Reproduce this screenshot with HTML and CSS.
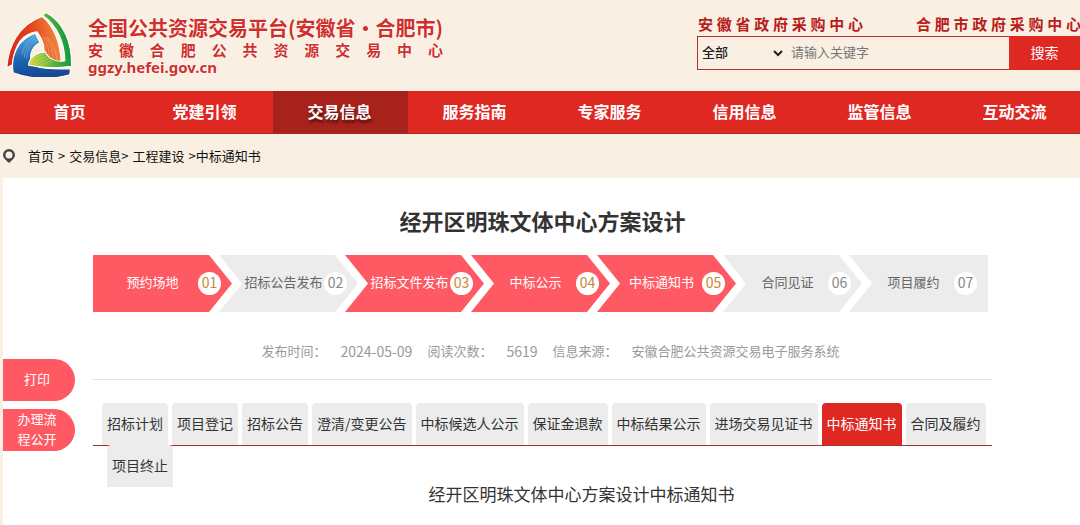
FILE: index.html
```html
<!DOCTYPE html>
<html lang="zh-CN">
<head>
<meta charset="utf-8">
<title>经开区明珠文体中心方案设计</title>
<link rel="stylesheet" href="styles.css">
</head>
<body>
<header class="header">
  <div class="brand">
    <svg class="logo" viewBox="8 0 199 190" aria-hidden="true">
      <defs>
        <linearGradient id="red" x1="0" y1=".8" x2="1" y2=".6"><stop offset="0" stop-color="#d5281c"/><stop offset=".5" stop-color="#e2401c"/><stop offset="1" stop-color="#f08a3c"/></linearGradient>
        <linearGradient id="blue" x1=".3" y1="0" x2=".4" y2="1"><stop offset="0" stop-color="#4fa9dd"/><stop offset=".6" stop-color="#1a63b0"/><stop offset="1" stop-color="#17448f"/></linearGradient>
        <linearGradient id="green" x1="0" y1=".8" x2="1" y2=".6"><stop offset="0" stop-color="#d3d532"/><stop offset=".6" stop-color="#4bae3b"/><stop offset="1" stop-color="#0d9540"/></linearGradient>
      </defs>
      <g stroke="#fff" stroke-width="3" stroke-linejoin="round">
        <path fill="url(#red)" d="M16 164C20 105 48 42 116 18C148 44 168 90 171 151L122 138C125 108 118 82 102 62C62 66 38 98 32 155Z"/>
        <path fill="url(#blue)" d="M34 178C26 125 50 82 97 66L110 92C82 108 76 138 94 158C120 168 160 168 197 167L195 184C140 200 80 196 34 178Z"/>
        <path fill="url(#green)" d="M118 15L128 7C176 34 202 90 200 160C160 166 112 164 78 157C78 136 98 121 126 119C134 138 158 150 181 144C180 90 158 42 118 15Z"/>
      </g>
      <g fill="none" stroke="#fff" stroke-width="1.500" opacity=".5">
        <path d="M112 76C123 92 127 110 128 120M118 76C132 92 136 112 137 132M124 76C141 94 146 114 148 138M130 76C148 94 156 118 158 142"/>
        <path d="M98 73C74 85 62 105 60 128M101 79C78 92 68 110 66 134M104 84C82 98 74 115 72 138"/>
        <path d="M84 153C92 136 108 127 126 126M92 155C102 140 114 134 130 133M101 157C112 145 124 140 137 139M112 158C122 150 134 146 146 145"/>
      </g>
    </svg>
    <div class="brand-text">
      <div class="brand-name">全国公共资源交易平台(安徽省·合肥市)</div>
      <div class="brand-org">安徽合肥公共资源交易中心</div>
      <div class="brand-url">ggzy.hefei.gov.cn</div>
    </div>
  </div>
  <div class="tools">
    <div class="centers">
      <a href="#">安徽省政府采购中心</a>
      <a href="#">合肥市政府采购中心</a>
    </div>
    <form class="search">
      <div class="search-box">
        <select aria-label="搜索范围"><option>全部</option></select>
        <input type="text" placeholder="请输入关键字" aria-label="关键字">
      </div>
      <button type="button">搜索</button>
    </form>
  </div>
</header>

<nav class="nav">
  <a href="#">首页</a>
  <a href="#">党建引领</a>
  <a href="#" class="active">交易信息</a>
  <a href="#">服务指南</a>
  <a href="#">专家服务</a>
  <a href="#">信用信息</a>
  <a href="#">监管信息</a>
  <a href="#">互动交流</a>
</nav>

<div class="crumbs">
  <svg class="pin" viewBox="0 0 12 14" aria-hidden="true"><path fill="#444" fill-rule="evenodd" d="M6 0a6 6 0 0 1 6 6c0 3-3 5-6 8C3 11 0 9 0 6a6 6 0 0 1 6-6Zm0 2.500a3.500 3.500 0 1 0 0 7a3.500 3.500 0 0 0 0-7Z"/></svg>
  <div class="trail"><a href="#">首页</a><span>&gt;</span><a href="#">交易信息&gt;</a><a href="#">工程建设</a><span>&gt;中标通知书</span></div>
</div>

<main class="page">
  <div class="side">
    <button type="button">打印</button>
    <button type="button">办理流<br>程公开</button>
  </div>

  <h1>经开区明珠文体中心方案设计</h1>

  <ol class="steps">
    <li class="done"><span>预约场地</span><b>01</b></li>
    <li><span>招标公告发布</span><b>02</b></li>
    <li class="done"><span>招标文件发布</span><b>03</b></li>
    <li class="done"><span>中标公示</span><b>04</b></li>
    <li class="done"><span>中标通知书</span><b>05</b></li>
    <li><span>合同见证</span><b>06</b></li>
    <li><span>项目履约</span><b>07</b></li>
  </ol>

  <div class="meta">
    <div><span>发布时间：</span><span class="figure">2024-05-09</span></div>
    <div><span>阅读次数：</span><span class="figure">5619</span></div>
    <div><span>信息来源：</span><span>安徽合肥公共资源交易电子服务系统</span></div>
  </div>

  <div class="tabs">
    <button type="button">招标计划</button>
    <button type="button">项目登记</button>
    <button type="button">招标公告</button>
    <button type="button">澄清/变更公告</button>
    <button type="button">中标候选人公示</button>
    <button type="button">保证金退款</button>
    <button type="button">中标结果公示</button>
    <button type="button">进场交易见证书</button>
    <button type="button" class="active">中标通知书</button>
    <button type="button">合同及履约</button>
    <button type="button" class="wrapped">项目终止</button>
  </div>

  <h2>经开区明珠文体中心方案设计中标通知书</h2>
</main>
</body>
</html>
```

FILE: styles.css
```css
* {
  box-sizing: border-box;
}

body {
  margin: 0;
  min-height: 100vh;
  display: flex;
  flex-direction: column;
  overflow-x: hidden;
  background: #f9f0e3;
  color: #333;
  font: 13px/20px "Noto Sans CJK SC", sans-serif;
}

a {
  color: inherit;
  text-decoration: none;
}

button,
input,
select {
  font: inherit;
  border: 0;
}

.header {
  display: flex;
  justify-content: space-between;
  padding: 10px 0 14px 4px;
}

.brand {
  display: flex;
  gap: 14px;
}

.logo {
  width: 70px;
  height: 67px;
}

.brand-text {
  width: 355px;
  padding-top: 5px;
  color: #d0302c;
  font-weight: 700;
  text-shadow: 0 0 2px #fff, 0 0 2px #fff;
}

.brand-name {
  font-size: 20px;
  line-height: 26px;
  white-space: nowrap;
}

.brand-org {
  font-size: 15px;
  line-height: 18px;
  text-align: justify;
  text-align-last: justify;
}

.brand-url {
  font: 700 15px/16px "Noto Sans", sans-serif;
}

.tools {
  width: 383px;
  padding-top: 3px;
}

.centers {
  display: flex;
  gap: 53px;
  padding: 0 0 1px 1px;
  color: #b81c1c;
  font: 700 15px/22px "Noto Sans CJK SC", sans-serif;
}

.centers a {
  flex: 0 0 165px;
  text-align: justify;
  text-align-last: justify;
}

.search {
  display: flex;
  height: 34px;
}

.search-box {
  flex: 1;
  display: flex;
  border: 1px solid #b5302b;
  border-right: 0;
}

.search select {
  width: 88px;
  padding: 0 0 3px;
  background: transparent;
  color: #222;
  font-weight: 500;
}

.search input {
  flex: 1;
  min-width: 0;
  padding: 0 5px 3px;
  background: transparent;
}

.search input::placeholder {
  color: #777;
}

.search button {
  width: 71px;
  padding: 0 0 3px;
  background: #e02823;
  color: #fff;
  font-size: 14px;
}

.nav {
  display: flex;
  padding-left: 3px;
  margin-right: -3px;
  background: #e02823;
  border-bottom: 1px solid #b02a22;
  color: #fff;
  font-size: 16px;
  font-weight: 700;
  line-height: 40px;
}

.nav a {
  flex: 1;
  padding: 0 2px 2px 0;
  text-align: center;
}

.nav .active {
  background: #a8221c;
  text-shadow: 1px 3px 2px #5c0f0c;
}

.crumbs {
  display: flex;
  align-items: center;
  gap: 13px;
  height: 44px;
  padding-left: 3px;
  color: #111;
}

.trail {
  display: flex;
  gap: 4px;
  padding-bottom: 1px;
}

.pin {
  width: 12px;
  height: 14px;
}

.page {
  position: relative;
  flex: 1;
  margin-left: 3px;
  padding: 26px 88px 0 90px;
  background: #fff;
}

h1 {
  margin: 0 0 19px;
  font-size: 22px;
  line-height: 32px;
  text-align: center;
}

.steps {
  display: flex;
  margin: 0 4px 0 0;
  padding: 0;
  list-style: none;
}

.steps li {
  flex: 1 1 139px;
  display: flex;
  align-items: center;
  height: 57px;
  padding: 0 11px 0 24px;
  background: #ececec;
  color: #666;
  white-space: nowrap;
  clip-path: polygon(0 0, calc(100% - 23px) 0, 100% 50%, calc(100% - 23px) 100%, 0 100%, 23px 50%);
}

.steps li + li {
  margin-left: -13px;
}

.steps li:first-child {
  padding-left: 14px;
  clip-path: polygon(0 0, calc(100% - 23px) 0, 100% 50%, calc(100% - 23px) 100%, 0 100%);
}

.steps li:last-child {
  clip-path: polygon(0 0, 100% 0, 100% 100%, 0 100%, 23px 50%);
}

.steps .done {
  background: #ff5a64;
  color: #fff;
}

.steps span {
  flex: 1;
  padding-bottom: 3px;
  text-align: center;
}

.steps b {
  width: 23px;
  padding-bottom: 2px;
  border-radius: 50%;
  background: #fff;
  color: #888;
  font-size: 14px;
  font-weight: 400;
  line-height: 21px;
  text-align: center;
}

.steps .done b {
  color: #c98636;
}

.meta {
  display: flex;
  justify-content: center;
  gap: 15px;
  padding: 29px 0 18px 16px;
  border-bottom: 1px solid #e2e2e2;
  color: #999;
}

.meta div {
  display: flex;
  gap: 14px;
}

.figure {
  font-size: 14px;
}

.tabs {
  position: relative;
  display: flex;
  flex-wrap: wrap;
  column-gap: 4px;
  margin-top: 23px;
  padding-left: 9px;
}

.tabs::before {
  content: "";
  position: absolute;
  top: 42px;
  left: 0;
  right: 0;
  border-top: 1px solid #a5302c;
}

.tabs button {
  position: relative;
  height: 42px;
  padding: 0 5px 2px;
  border-radius: 4px 4px 0 0;
  background: #ececec;
  color: #333;
  font-size: 14px;
}

.tabs .active {
  background: #e02823;
  color: #fff;
}

.tabs .wrapped {
  margin-left: 5px;
}

h2 {
  margin: 0;
  padding: 0 0 16px 78px;
  font-size: 17px;
  font-weight: 400;
  line-height: 14px;
  text-align: center;
}

.side {
  position: absolute;
  top: 181px;
  left: 0;
  display: grid;
  gap: 8px;
}

.side button {
  width: 72px;
  height: 42px;
  padding: 0 4px 2px 0;
  border-radius: 0 21px 21px 0;
  background: #ff5a64;
  color: #fff;
}
```
